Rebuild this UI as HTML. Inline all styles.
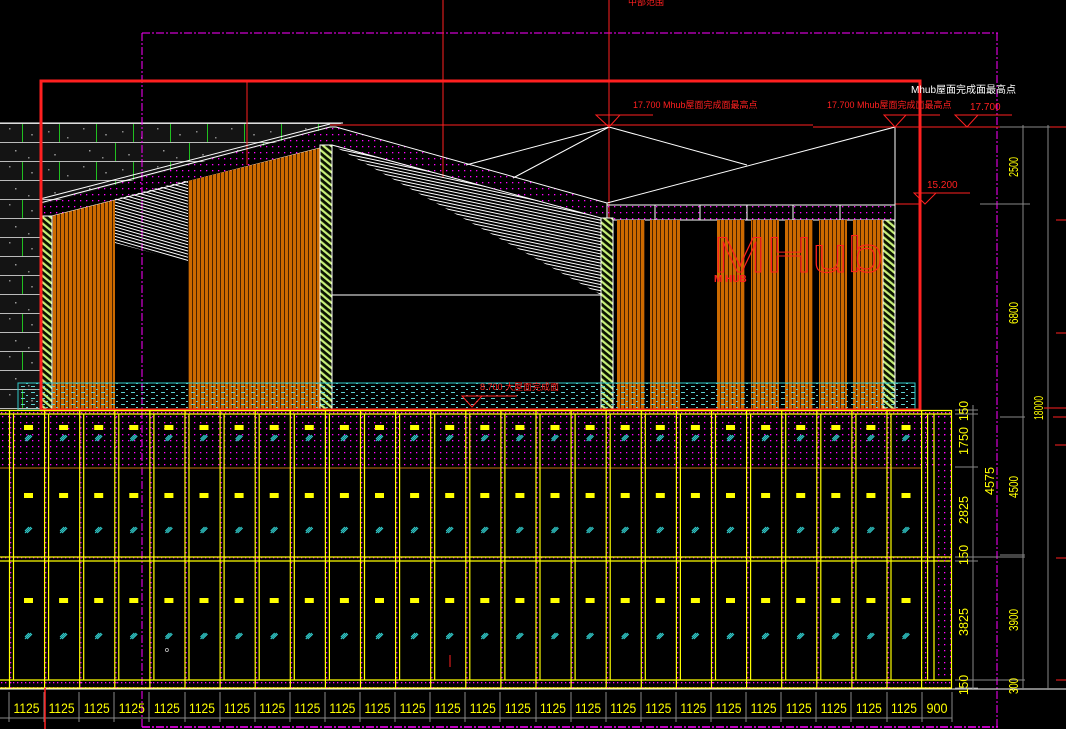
<!DOCTYPE html>
<html><head><meta charset="utf-8"><style>
html,body{margin:0;padding:0;background:#000;width:1066px;height:729px;overflow:hidden}
svg{display:block}
text{font-family:"Liberation Sans","Noto Sans CJK SC",sans-serif}
</style></head><body>
<svg width="1066" height="729" viewBox="0 0 1066 729" xmlns="http://www.w3.org/2000/svg">
<defs>
<pattern id="mdot" width="6" height="6" patternUnits="userSpaceOnUse"><rect x="2" y="2" width="1.3" height="1.3" fill="#ff00ff"/></pattern>
<pattern id="mdot2" width="4" height="5" patternUnits="userSpaceOnUse"><rect x="1" y="2" width="1.3" height="1.3" fill="#ff00ff"/></pattern>
<pattern id="orange" width="4" height="10" patternUnits="userSpaceOnUse"><rect width="4" height="10" fill="#cc6a00"/><rect x="0" width="0.9" height="10" fill="#3a1a00"/></pattern>
<pattern id="green" width="5" height="5" patternUnits="userSpaceOnUse" patternTransform="rotate(-50)"><rect width="5" height="5" fill="#0a1200"/><rect width="2.2" height="5" fill="#c8f07a"/></pattern>
<pattern id="whatch" width="6" height="3" patternUnits="userSpaceOnUse" patternTransform="rotate(16)"><rect y="0" width="6" height="1" fill="#fff"/></pattern>
<pattern id="whatch2" width="6" height="3" patternUnits="userSpaceOnUse" patternTransform="rotate(12)"><rect y="0" width="6" height="1" fill="#fff"/></pattern>
<pattern id="cyan" width="10" height="6" patternUnits="userSpaceOnUse"><rect x="1" y="2" width="4" height="1" fill="#5fd0d0"/><rect x="6" y="5" width="2" height="1" fill="#5fd0d0"/></pattern>
<pattern id="brick" width="74" height="38" patternUnits="userSpaceOnUse" x="4" y="123"><rect width="74" height="38" fill="#141414"/><rect x="0" y="0" width="74" height="1" fill="#bbb"/><rect x="0" y="19" width="74" height="1" fill="#bbb"/><rect x="18" y="1" width="1" height="18" fill="#20c020"/><rect x="55" y="1" width="1" height="18" fill="#20c020"/><rect x="37" y="20" width="1" height="18" fill="#20c020"/><rect x="5" y="5" width="1.5" height="1.5" fill="#888"/><rect x="27" y="11" width="2" height="1.5" fill="#777"/><rect x="44" y="8" width="1.5" height="1.5" fill="#888"/><rect x="63" y="14" width="1.5" height="1.5" fill="#888"/><rect x="11" y="27" width="1.5" height="1.5" fill="#999"/><rect x="50" y="31" width="2" height="1.5" fill="#777"/><rect x="24" y="34" width="1.5" height="1.5" fill="#888"/></pattern>
<g id="bay">
 <rect x="0" y="414" width="4" height="274" fill="url(#mdot2)"/>
 <line x1="0.5" y1="410" x2="0.5" y2="688" stroke="#ffff00" stroke-width="1.2"/>
 <line x1="4.5" y1="414" x2="4.5" y2="680" stroke="#ffff00" stroke-width="1.2"/>
 <rect x="15" y="425" width="9" height="5" fill="#ffff00"/>
 <path d="M16 441 l6 -6 M18 441 l5 -5 M16 439 l4 -4" stroke="#30c8c8" stroke-width="1.2"/>
 <rect x="15" y="493" width="9" height="5" fill="#ffff00"/>
 <path d="M16 533 l6 -6 M18 533 l5 -5 M16 531 l4 -4" stroke="#30c8c8" stroke-width="1.2"/>
 <rect x="15" y="598" width="9" height="5" fill="#ffff00"/>
 <path d="M16 639 l6 -6 M18 639 l5 -5 M16 637 l4 -4" stroke="#30c8c8" stroke-width="1.2"/>
</g>
</defs>
<rect width="1066" height="729" fill="#000"/>

<polygon points="0,123 343,123 330,128 40,205 40,410 0,410" fill="url(#brick)"/>
<line x1="0" y1="123" x2="343" y2="123" stroke="#fff" stroke-width="1"/>

<line x1="142" y1="33" x2="998" y2="33" stroke="#ff00ff" stroke-width="1" stroke-dasharray="8,2,2,2"/>
<line x1="142" y1="33" x2="142" y2="729" stroke="#ff00ff" stroke-width="1" stroke-dasharray="8,2,2,2"/>
<line x1="997" y1="33" x2="997" y2="729" stroke="#ff00ff" stroke-width="1" stroke-dasharray="8,2,2,2"/>
<line x1="142" y1="727" x2="998" y2="727" stroke="#ff00ff" stroke-width="1.5" stroke-dasharray="8,2,2,2"/>

<line x1="443" y1="0" x2="443" y2="178" stroke="#ff2020"/>
<line x1="609" y1="0" x2="609" y2="245" stroke="#ff2020"/>
<line x1="247" y1="80" x2="247" y2="165" stroke="#ff2020"/>
<line x1="330" y1="125" x2="813" y2="125" stroke="#ff2020"/>
<line x1="813" y1="127" x2="1066" y2="127" stroke="#ff2020"/>
<line x1="895" y1="204" x2="920" y2="204" stroke="#ff2020"/>

<g stroke="#fff" stroke-width="1" fill="none">
<polyline points="466,165 609,127 747,165"/>
<line x1="513" y1="178" x2="609" y2="127"/>
<line x1="895" y1="127" x2="607" y2="203"/>
<line x1="895" y1="127" x2="895" y2="205"/>
<line x1="332" y1="295" x2="601" y2="295"/>
</g>

<polygon points="115,199 188,180 188,262 115,243" fill="url(#whatch)"/>
<polygon points="332,145 601,218 601,295" fill="url(#whatch2)"/>

<polygon points="40,203 330,127 336,127 607,203 607,218 601,218 332,145 52,216 40,216" fill="url(#mdot)" stroke="#fff" stroke-width="1"/>
<line x1="40" y1="199" x2="330" y2="124" stroke="#fff"/>
<rect x="607" y="205" width="288" height="15" fill="url(#mdot)" stroke="#fff"/>
<g stroke="#fff"><line x1="655" y1="205" x2="655" y2="220"/><line x1="700" y1="205" x2="700" y2="220"/><line x1="747" y1="205" x2="747" y2="220"/><line x1="793" y1="205" x2="793" y2="220"/><line x1="840" y1="205" x2="840" y2="220"/></g>

<polygon points="52,216 115,200 115,410 52,410" fill="url(#orange)"/>
<polygon points="188,181 320,148 320,410 188,410" fill="url(#orange)"/>
<rect x="617" y="220" width="28" height="190" fill="url(#orange)"/>
<rect x="650" y="220" width="30" height="190" fill="url(#orange)"/>
<rect x="717" y="220" width="28" height="190" fill="url(#orange)"/>
<rect x="751" y="220" width="28" height="190" fill="url(#orange)"/>
<rect x="785" y="220" width="28" height="190" fill="url(#orange)"/>
<rect x="819" y="220" width="28" height="190" fill="url(#orange)"/>
<rect x="853" y="220" width="30" height="190" fill="url(#orange)"/>

<rect x="42" y="216" width="10" height="194" fill="url(#green)" stroke="#fff"/>
<rect x="320" y="145" width="12" height="265" fill="url(#green)" stroke="#fff"/>
<rect x="601" y="218" width="12" height="192" fill="url(#green)" stroke="#fff"/>
<rect x="883" y="220" width="12" height="190" fill="url(#green)" stroke="#fff"/>

<rect x="18" y="383" width="897" height="27" fill="url(#cyan)" stroke="#30c8c8"/>

<text x="713" y="272" font-size="50" fill="none" stroke="#ff2020" stroke-width="1" textLength="170" lengthAdjust="spacingAndGlyphs">MHub</text>
<text x="714" y="282" font-size="10" fill="#ff2020" font-weight="bold">M HUB</text>

<rect x="41" y="81" width="879" height="329" fill="none" stroke="#ff2020" stroke-width="3"/>

<text x="628" y="5" font-size="9" fill="#ff2020">中部范围</text>
<text x="911" y="93" font-size="10" fill="#fff">Mhub屋面完成面最高点</text>
<text x="633" y="108" font-size="9" fill="#ff2020">17.700 Mhub屋面完成面最高点</text>
<text x="827" y="108" font-size="9" fill="#ff2020">17.700 Mhub屋面完成面最高点</text>
<text x="970" y="110" font-size="10" fill="#ff2020">17.700</text>
<text x="927" y="188" font-size="10" fill="#ff2020">15.200</text>
<text x="480" y="390" font-size="9" fill="#ff2020">8.700 大屋面完成面</text>
<g stroke="#ff2020" fill="none">
<path d="M596 115 L620 115 L609 127 Z M596 115 H653"/>
<path d="M884 115 L906 115 L895 127 Z M906 115 H940"/>
<path d="M955 115 L978 115 L967 127 Z M978 115 H1012"/>
<path d="M914 193 L936 193 L925 204 Z M936 193 H970"/>
<path d="M462 396 L482 396 L472 407 Z M482 396 H517"/>
</g>

<rect x="0" y="414" width="952" height="54" fill="url(#mdot)"/>
<rect x="0" y="410" width="952" height="4" fill="url(#mdot2)"/>
<rect x="0" y="557" width="952" height="4" fill="url(#mdot2)"/>
<rect x="0" y="680" width="952" height="8" fill="url(#mdot2)"/>
<line x1="0" y1="468" x2="922" y2="468" stroke="#c07010"/>
<g stroke="#ffff00" stroke-width="1.2" fill="none">
<line x1="0" y1="410.5" x2="952" y2="410.5"/>
<line x1="0" y1="414" x2="952" y2="414"/>
<line x1="0" y1="557" x2="952" y2="557"/>
<line x1="0" y1="561" x2="952" y2="561"/>
<line x1="0" y1="680" x2="952" y2="680"/>
<line x1="0" y1="688" x2="952" y2="688"/>
<line x1="951.5" y1="410" x2="951.5" y2="688"/>
<line x1="934" y1="414" x2="934" y2="680"/>
</g>
<use href="#bay" x="9"/><use href="#bay" x="44.1"/><use href="#bay" x="79.2"/><use href="#bay" x="114.3"/><use href="#bay" x="149.4"/><use href="#bay" x="184.5"/><use href="#bay" x="219.6"/><use href="#bay" x="254.7"/><use href="#bay" x="289.8"/><use href="#bay" x="324.9"/><use href="#bay" x="360"/><use href="#bay" x="395.1"/><use href="#bay" x="430.2"/><use href="#bay" x="465.3"/><use href="#bay" x="500.4"/><use href="#bay" x="535.5"/><use href="#bay" x="570.6"/><use href="#bay" x="605.7"/><use href="#bay" x="640.8"/><use href="#bay" x="675.9"/><use href="#bay" x="711"/><use href="#bay" x="746.1"/><use href="#bay" x="781.2"/><use href="#bay" x="816.3"/><use href="#bay" x="851.4"/><use href="#bay" x="886.5"/>
<rect x="921.6" y="414" width="6" height="266" fill="url(#mdot2)"/>
<line x1="921.6" y1="410" x2="921.6" y2="688" stroke="#ffff00" stroke-width="1.2"/>
<line x1="927.6" y1="414" x2="927.6" y2="680" stroke="#ffff00" stroke-width="1.2"/>
<rect x="935" y="415" width="16" height="265" fill="url(#mdot)"/>
<line x1="450" y1="655" x2="450" y2="667" stroke="#ff2020"/>
<text x="165" y="652" font-size="7" fill="#fff">o</text>

<line x1="0" y1="689" x2="1066" y2="689" stroke="#fff"/>
<line x1="0" y1="718" x2="952" y2="718" stroke="#888"/>
<g stroke="#888">
<path d="M9 692V722M44 692V722M79 692V722M114 692V722M149 692V722M185 692V722M220 692V722M255 692V722M290 692V722M325 692V722M360 692V722M395 692V722M430 692V722M465 692V722M500 692V722M536 692V722M571 692V722M606 692V722M641 692V722M676 692V722M711 692V722M746 692V722M781 692V722M816 692V722M851 692V722M887 692V722M922 692V722M952 692V722"/>
</g>
<line x1="45" y1="688" x2="45" y2="729" stroke="#ff2020" stroke-width="1.5"/>
<g font-size="14" fill="#ffff00" text-anchor="middle">
<text x="26.5" y="713" textLength="26" lengthAdjust="spacingAndGlyphs">1125</text>
<text x="61.6" y="713" textLength="26" lengthAdjust="spacingAndGlyphs">1125</text>
<text x="96.7" y="713" textLength="26" lengthAdjust="spacingAndGlyphs">1125</text>
<text x="131.8" y="713" textLength="26" lengthAdjust="spacingAndGlyphs">1125</text>
<text x="166.9" y="713" textLength="26" lengthAdjust="spacingAndGlyphs">1125</text>
<text x="202" y="713" textLength="26" lengthAdjust="spacingAndGlyphs">1125</text>
<text x="237.1" y="713" textLength="26" lengthAdjust="spacingAndGlyphs">1125</text>
<text x="272.2" y="713" textLength="26" lengthAdjust="spacingAndGlyphs">1125</text>
<text x="307.3" y="713" textLength="26" lengthAdjust="spacingAndGlyphs">1125</text>
<text x="342.4" y="713" textLength="26" lengthAdjust="spacingAndGlyphs">1125</text>
<text x="377.5" y="713" textLength="26" lengthAdjust="spacingAndGlyphs">1125</text>
<text x="412.6" y="713" textLength="26" lengthAdjust="spacingAndGlyphs">1125</text>
<text x="447.7" y="713" textLength="26" lengthAdjust="spacingAndGlyphs">1125</text>
<text x="482.8" y="713" textLength="26" lengthAdjust="spacingAndGlyphs">1125</text>
<text x="517.9" y="713" textLength="26" lengthAdjust="spacingAndGlyphs">1125</text>
<text x="553" y="713" textLength="26" lengthAdjust="spacingAndGlyphs">1125</text>
<text x="588.1" y="713" textLength="26" lengthAdjust="spacingAndGlyphs">1125</text>
<text x="623.2" y="713" textLength="26" lengthAdjust="spacingAndGlyphs">1125</text>
<text x="658.3" y="713" textLength="26" lengthAdjust="spacingAndGlyphs">1125</text>
<text x="693.4" y="713" textLength="26" lengthAdjust="spacingAndGlyphs">1125</text>
<text x="728.5" y="713" textLength="26" lengthAdjust="spacingAndGlyphs">1125</text>
<text x="763.6" y="713" textLength="26" lengthAdjust="spacingAndGlyphs">1125</text>
<text x="798.7" y="713" textLength="26" lengthAdjust="spacingAndGlyphs">1125</text>
<text x="833.8" y="713" textLength="26" lengthAdjust="spacingAndGlyphs">1125</text>
<text x="868.9" y="713" textLength="26" lengthAdjust="spacingAndGlyphs">1125</text>
<text x="904" y="713" textLength="26" lengthAdjust="spacingAndGlyphs">1125</text>
<text x="937" y="713" textLength="21" lengthAdjust="spacingAndGlyphs">900</text>
</g>

<g stroke="#888" fill="none">
<line x1="973" y1="405" x2="973" y2="690"/>
<line x1="1023" y1="125" x2="1023" y2="690"/>
<line x1="1048" y1="125" x2="1048" y2="690"/>
<path d="M955 410H978M955 414H978M955 467H978M955 557H1025M955 561H978M955 680H1025M955 688H978M1000 417H1025M1000 555H1025M980 204H1030M1000 127H1050"/>
</g>
<g stroke="#ff2020"><path d="M1044 408H1066M1053 417H1066M1055 445H1066M1056 558H1066M1056 680H1066M1056 220H1066M1056 333H1066"/></g>
<g font-size="13" fill="#ffff00" text-anchor="middle">
<text transform="translate(968,411) rotate(-90)" textLength="20" lengthAdjust="spacingAndGlyphs">150</text>
<text transform="translate(968,441) rotate(-90)" textLength="28" lengthAdjust="spacingAndGlyphs">1750</text>
<text transform="translate(968,510) rotate(-90)" textLength="28" lengthAdjust="spacingAndGlyphs">2825</text>
<text transform="translate(968,555) rotate(-90)" textLength="20" lengthAdjust="spacingAndGlyphs">150</text>
<text transform="translate(968,622) rotate(-90)" textLength="28" lengthAdjust="spacingAndGlyphs">3825</text>
<text transform="translate(968,685) rotate(-90)" textLength="20" lengthAdjust="spacingAndGlyphs">150</text>
<text transform="translate(994,481) rotate(-90)" textLength="28" lengthAdjust="spacingAndGlyphs">4575</text>
<text transform="translate(1018,487) rotate(-90)" textLength="22" lengthAdjust="spacingAndGlyphs">4500</text>
<text transform="translate(1018,620) rotate(-90)" textLength="22" lengthAdjust="spacingAndGlyphs">3900</text>
<text transform="translate(1018,686) rotate(-90)" textLength="16" lengthAdjust="spacingAndGlyphs">300</text>
<text transform="translate(1043,408) rotate(-90)" textLength="24" lengthAdjust="spacingAndGlyphs">18000</text>
<text transform="translate(1018,167) rotate(-90)" textLength="20" lengthAdjust="spacingAndGlyphs">2500</text>
<text transform="translate(1018,313) rotate(-90)" textLength="22" lengthAdjust="spacingAndGlyphs">6800</text>
</g>
</svg>
</body></html>
